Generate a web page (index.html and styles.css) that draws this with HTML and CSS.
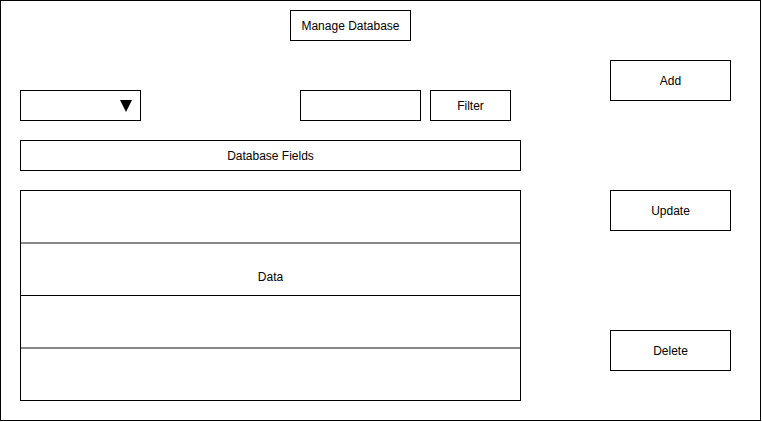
FILE: index.html
```html
<!DOCTYPE html>
<html>
<head>
<meta charset="utf-8">
<link rel="stylesheet" href="styles.css">
</head>
<body>
<div class="frame">
  <div class="main">
    <div class="box title">Manage Database</div>
    <div class="toolbar">
      <div class="box select">
        <svg class="caret" width="12" height="12" viewBox="0 0 12 12"><polygon points="0,0 12,0 6,12" fill="#000"/></svg>
      </div>
      <div class="box search"></div>
      <div class="box filter">Filter</div>
    </div>
    <div class="box fields">Database Fields</div>
    <div class="data">
      <div class="row"></div>
      <div class="row row-gray row-label">Data</div>
      <div class="row row-black"></div>
      <div class="row row-gray"></div>
    </div>
  </div>
  <div class="side">
    <div class="box action add">Add</div>
    <div class="box action update">Update</div>
    <div class="box action delete">Delete</div>
  </div>
</div>
</body>
</html>
```

FILE: styles.css
```css
html, body {
  margin: 0;
  padding: 0;
  background: #fff;
}

body {
  font-family: "Liberation Sans", Arial, sans-serif;
  font-size: 12px;
  line-height: 14px;
  color: #000;
}

.frame {
  box-sizing: border-box;
  width: 761px;
  height: 421px;
  border: 1px solid #000;
  padding-left: 19px;
  display: flex;
  background: #fff;
}

.box {
  box-sizing: border-box;
  border: 1px solid #000;
  background: #fff;
  display: flex;
  align-items: center;
  justify-content: center;
}

.main {
  width: 501px;
  display: flex;
  flex-direction: column;
}

.title {
  margin: 9px 0 0 270px;
  width: 121px;
  height: 31px;
}

.toolbar {
  margin-top: 49px;
  display: flex;
  height: 31px;
}

.select {
  width: 121px;
  height: 31px;
  justify-content: flex-end;
  padding-right: 8px;
}

.caret {
  display: block;
  margin-top: 1px;
}

.search {
  width: 121px;
  height: 31px;
  margin-left: 159px;
}

.filter {
  width: 81px;
  height: 31px;
  margin-left: 9px;
}

.fields {
  margin-top: 19px;
  width: 501px;
  height: 31px;
}

.data {
  box-sizing: border-box;
  margin-top: 19px;
  width: 501px;
  height: 211px;
  border: 1px solid #000;
  display: flex;
  flex-direction: column;
}

.row {
  height: 51px;
  flex: none;
}

.row-gray {
  border-top: 2px solid #878787;
}

.row-black {
  border-top: 1px solid #000;
}

.row-label {
  box-sizing: content-box;
  height: 25px;
  padding-top: 26px;
  text-align: center;
}

.side {
  margin-left: 89px;
  width: 121px;
  display: flex;
  flex-direction: column;
}

.action {
  width: 121px;
  height: 41px;
}

.add {
  margin-top: 59px;
}

.update {
  margin-top: 89px;
}

.delete {
  margin-top: 99px;
}
```
